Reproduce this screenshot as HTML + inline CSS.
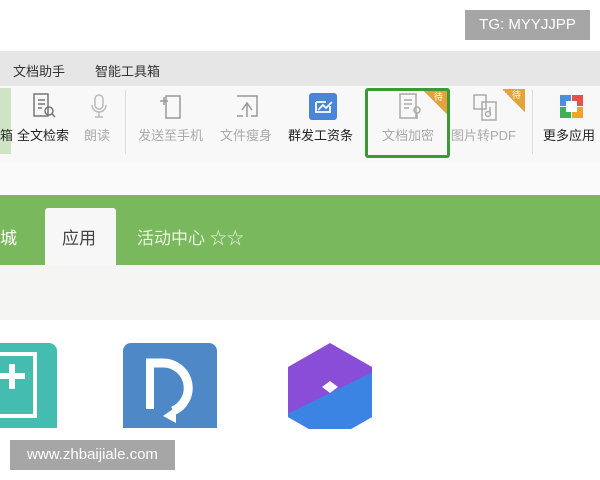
<!DOCTYPE html><html><head><meta charset="utf-8"><style>
*{margin:0;padding:0;box-sizing:border-box}
body{width:600px;height:480px;overflow:hidden;background:#fff;position:relative;font-family:"Liberation Sans","Noto Sans CJK SC",sans-serif}
.a{position:absolute}
.t{font-size:13px;white-space:nowrap}
</style></head><body>
<div class="a" style="left:465px;top:10px;width:125px;height:30px;background:#a6a6a6;color:#fff;font-size:15px;line-height:30px;text-align:center">TG: MYYJJPP</div>
<div class="a" style="left:0;top:51px;width:600px;height:35px;background:#e6e6e6"></div>
<div class="a t" style="left:13px;top:61px;color:#333">文档助手</div>
<div class="a t" style="left:95px;top:61px;color:#333">智能工具箱</div>
<div class="a" style="left:0;top:86px;width:600px;height:76px;background:#f8f8f8"></div>
<div class="a" style="left:0;top:88px;width:11px;height:66px;background:#cfe4c4"></div>
<div class="a t" style="left:0;top:125px;color:#333">箱</div>
<svg class="a" style="left:30px;top:92px" width="28" height="28" viewBox="0 0 28 28" fill="none" stroke="#777" stroke-width="1.5"><path d="M4 2h14v22H4z M8 8h7 M8 12h7 M8 16h4"/><circle cx="19" cy="19" r="4"/><path d="M22 22l3 3"/></svg>
<div class="a t" style="left:17px;top:125px;color:#222">全文检索</div>
<svg class="a" style="left:88px;top:93px" width="22" height="28" viewBox="0 0 22 28" fill="none" stroke="#bbb" stroke-width="1.5"><rect x="7" y="2" width="8" height="14" rx="4"/><path d="M4 12a7 7 0 0 0 14 0M11 19v5M7 24h8"/></svg>
<div class="a t" style="left:84px;top:125px;color:#aaa">朗读</div>
<div class="a" style="left:125px;top:90px;width:1px;height:64px;background:#ddd"></div>
<svg class="a" style="left:158px;top:93px" width="28" height="28" viewBox="0 0 28 28" fill="none" stroke="#999" stroke-width="1.5"><rect x="8" y="3" width="14" height="22"/><path d="M2 8h8M6 4v8"/></svg>
<div class="a t" style="left:138px;top:125px;color:#aaa">发送至手机</div>
<svg class="a" style="left:233px;top:93px" width="28" height="28" viewBox="0 0 28 28" fill="none" stroke="#999" stroke-width="1.5"><path d="M4 3h20v20h-6M10 23H4z"/><path d="M9 17l5-7 5 7M14 10v14"/></svg>
<div class="a t" style="left:220px;top:125px;color:#aaa">文件瘦身</div>
<div class="a" style="left:309px;top:93px;width:28px;height:27px;background:#4a86d8;border-radius:3px"></div>
<svg class="a" style="left:309px;top:93px" width="28" height="27" viewBox="0 0 28 27" fill="none" stroke="#fff" stroke-width="1.8"><path d="M7 9h10M7 9v10h14v-6M9 17l5-5 3 3 6-6"/></svg>
<div class="a t" style="left:288px;top:125px;color:#222">群发工资条</div>
<div class="a" style="left:365px;top:88px;width:85px;height:70px;border:3px solid #3b9a35;border-radius:3px"></div>
<div class="a" style="left:424px;top:91px;width:23px;height:23px;background:linear-gradient(45deg,transparent 50%,#e3a33a 50%)"></div>
<div class="a" style="left:434px;top:90px;font-size:9px;color:#fff">待</div>
<svg class="a" style="left:396px;top:92px" width="28" height="30" viewBox="0 0 28 30" fill="none" stroke="#aaa" stroke-width="1.5"><path d="M4 2h16v24H4zM8 8h8M8 12h8M8 16h5"/><circle cx="21" cy="18" r="3"/><path d="M21 21v6"/></svg>
<div class="a t" style="left:382px;top:125px;color:#aaa">文档加密</div>
<div class="a" style="left:502px;top:89px;width:23px;height:23px;background:linear-gradient(45deg,transparent 50%,#e3a33a 50%)"></div>
<div class="a" style="left:512px;top:88px;font-size:9px;color:#fff">待</div>
<svg class="a" style="left:470px;top:92px" width="30" height="32" viewBox="0 0 30 32" fill="none" stroke="#aaa" stroke-width="1.5"><path d="M4 3h12v14H4zM12 10h14v18H12z"/><circle cx="18" cy="22" r="2.5"/><path d="M20 22v-7"/></svg>
<div class="a t" style="left:451px;top:125px;color:#aaa">图片转PDF</div>
<div class="a" style="left:532px;top:90px;width:1px;height:64px;background:#ddd"></div>
<div class="a" style="left:560px;top:95px;width:11px;height:11px;background:#4c8edb"></div>
<div class="a" style="left:572px;top:95px;width:11px;height:11px;background:#e4524a"></div>
<div class="a" style="left:560px;top:107px;width:11px;height:11px;background:#3fae5a"></div>
<div class="a" style="left:572px;top:107px;width:11px;height:11px;background:#f0a330"></div>
<div class="a" style="left:566px;top:101px;width:11px;height:11px;background:#fff"></div>
<div class="a t" style="left:543px;top:125px;color:#222">更多应用</div>
<div class="a" style="left:0;top:162px;width:600px;height:33px;background:#fafafa"></div>
<div class="a" style="left:0;top:195px;width:600px;height:70px;background:#7ab85e"></div>
<div class="a" style="left:45px;top:208px;width:71px;height:57px;background:#f7f7f7;border-radius:3px 3px 0 0"></div>
<div class="a" style="left:0;top:224px;font-size:17px;color:#fff">城</div>
<div class="a" style="left:62px;top:224px;font-size:17px;color:#444">应用</div>
<div class="a" style="left:137px;top:224px;font-size:17px;color:#eaf7dd">活动中心 ☆☆</div>
<div class="a" style="left:0;top:265px;width:600px;height:55px;background:#f5f5f4"></div>
<div class="a" style="left:0;top:343px;width:57px;height:85px;background:#44bdb0;border-radius:0 8px 0 0"></div>
<div class="a" style="left:-10px;top:352px;width:47px;height:66px;border:4px solid #fff"></div>
<div class="a" style="left:0;top:373px;width:25px;height:6px;background:#fff"></div>
<div class="a" style="left:9px;top:364px;width:6px;height:25px;background:#fff"></div>
<div class="a" style="left:123px;top:343px;width:94px;height:85px;background:#4f88c7;border-radius:8px 8px 0 0"></div>
<svg class="a" style="left:123px;top:343px" width="94" height="85" viewBox="0 0 94 85"><path d="M23 20h17a25 25 0 0 1 10 48" fill="none" stroke="#fff" stroke-width="9"/><path d="M27 20v46" stroke="#fff" stroke-width="8"/><path d="M40 73l13-9v16z" fill="#fff"/></svg>
<svg class="a" style="left:285px;top:343px" width="90" height="86" viewBox="0 0 90 86"><defs><clipPath id="h"><path d="M45 0l42 24v50L45 98 3 74V24z"/></clipPath></defs><g clip-path="url(#h)"><rect width="90" height="90" fill="#8a4dd8"/><path d="M0 72L90 28V90H0z" fill="#3b84e4"/><path d="M45 38l8 6-8 6-8-6z" fill="#fff"/></g></svg>
<div class="a" style="left:10px;top:440px;width:165px;height:30px;background:#a6a6a6;color:#fff;font-size:15px;line-height:30px;text-align:center">www.zhbaijiale.com</div>
</body></html>
